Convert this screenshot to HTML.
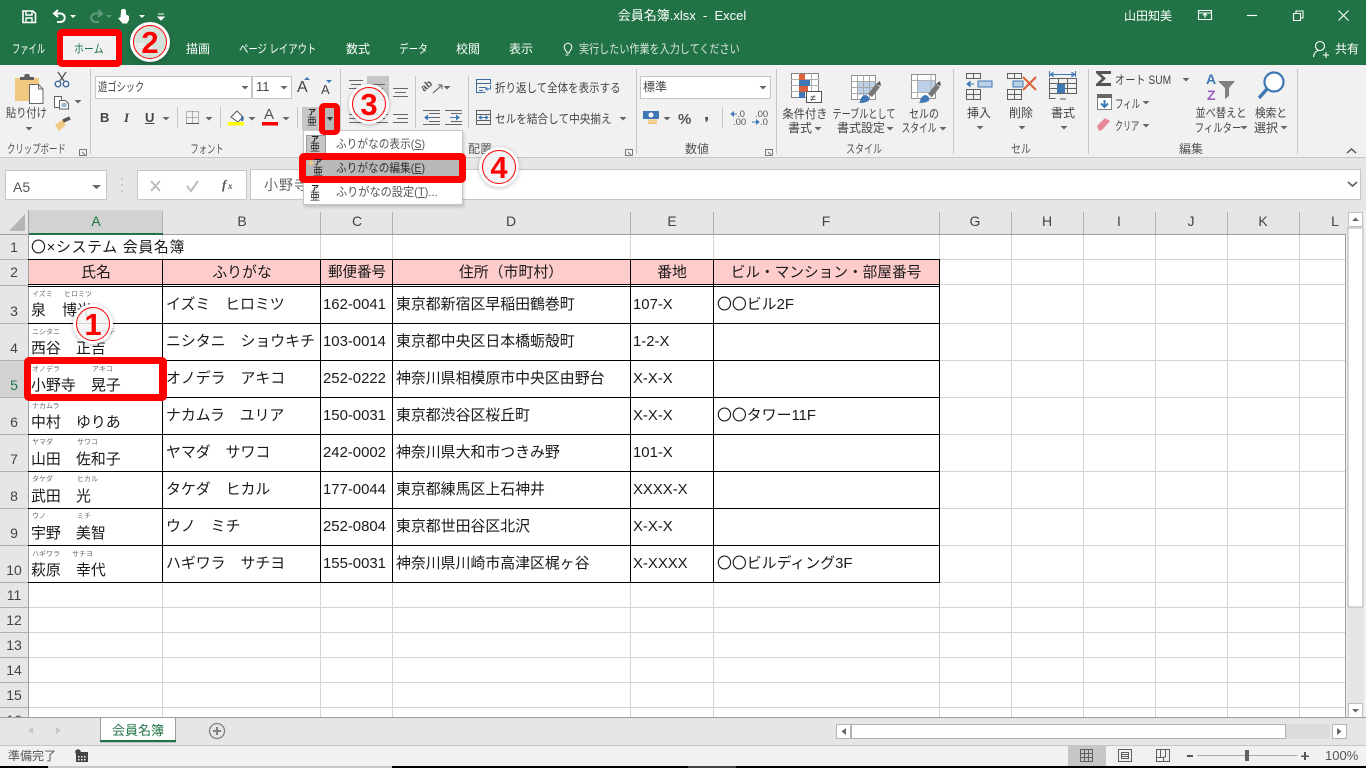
<!DOCTYPE html>
<html lang="ja"><head><meta charset="utf-8"><title>会員名簿.xlsx - Excel</title>
<style>
html,body{margin:0;padding:0;width:1366px;height:768px;overflow:hidden;background:#f1f1f1}
body{position:relative;font-family:"Liberation Sans","Noto Sans CJK JP",sans-serif;color:#444}
.b{position:absolute;box-sizing:border-box}
.t{position:absolute;white-space:nowrap;font-size:12px;line-height:16px;height:16px;color:#444}
.s{transform:scaleX(var(--k,1));transform-origin:0 50%}
.m{transform:translateX(-50%) scaleX(var(--k,1))}
.w{color:#fff}
.g{color:#555}
.c{position:absolute;white-space:nowrap;font-size:14.9px;line-height:20px;height:20px;color:#1a1a1a}
.f{position:absolute;white-space:nowrap;font-size:7px;line-height:10px;height:10px;color:#666}
.h{position:absolute;white-space:nowrap;font-size:14px;line-height:18px;height:18px;color:#444}
.r{position:absolute;box-sizing:border-box;border-style:solid;border-color:#f00;border-radius:5px;z-index:6}
.ka{font-size:8px!important;line-height:10px!important;font-weight:bold;color:#222}
.ab{font-size:10px!important;line-height:14px!important;color:#222}
svg{position:absolute;left:0;top:0}
</style></head><body>

<div class="b" style="left:0;top:0;width:1366px;height:65px;background:#217346"></div>
<div class="b" style="left:0;top:65px;width:1366px;height:93px;background:#f1f1f1;border-bottom:1px solid #c6c6c6"></div>
<div class="b" style="left:0;top:158px;width:1366px;height:52px;background:#e6e6e6"></div>
<div class="b" style="left:5px;top:170px;width:102px;height:30px;background:#fff;border:1px solid #c6c6c6"></div>
<div class="b" style="left:137px;top:170px;width:110px;height:30px;background:#fff;border:1px solid #c6c6c6"></div>
<div class="b" style="left:250px;top:169px;width:1111px;height:31px;background:#fff;border:1px solid #c6c6c6"></div>
<div class="b" style="left:95px;top:76px;width:157px;height:23px;background:#fff;border:1px solid #c6c6c6"></div>
<div class="b" style="left:252px;top:76px;width:40px;height:23px;background:#fff;border:1px solid #c6c6c6"></div>
<div class="b" style="left:640px;top:76px;width:131px;height:23px;background:#fff;border:1px solid #c6c6c6"></div>
<div class="b" style="left:367px;top:76px;width:22px;height:25px;background:#c6c6c6"></div>
<div class="b" style="left:302px;top:107px;width:17px;height:23px;background:#c6c6c6"></div>

<!-- sheet -->
<div class="b" style="left:0;top:210px;width:1347px;height:25px;background:#e6e6e6"></div>
<div class="b" style="left:0;top:235px;width:28px;height:482px;background:#e6e6e6"></div>
<div class="b" style="left:28px;top:235px;width:1317px;height:482px;background:#fff"></div>
<div class="b" style="left:29px;top:210px;width:134px;height:25px;background:#d2d2d2"></div>
<div class="b" style="left:0;top:361px;width:28px;height:37px;background:#d2d2d2"></div>
<div class="b" style="left:28px;top:260px;width:911px;height:25px;background:#ffcccc"></div>

<svg width="1366" height="768" viewBox="0 0 1366 768" fill="none">
<defs>
<path id="a" d="M-3.5 0h7l-3.5 3.5z" fill="#666"/>
</defs>
<g shape-rendering="crispEdges">
<!-- light grid -->
<path stroke="#d4d4d4" d="M162.5 235V717M320.5 235V717M392.5 235V717M630.5 235V717M713.5 235V717M939.5 235V717M1011.5 235V717M1083.5 235V717M1155.5 235V717M1227.5 235V717M1299.5 235V717M28 259.5H1345M28 284.5H1345M28 323.5H1345M28 360.5H1345M28 397.5H1345M28 434.5H1345M28 471.5H1345M28 508.5H1345M28 545.5H1345M28 582.5H1345M28 607.5H1345M28 632.5H1345M28 657.5H1345M28 682.5H1345M28 707.5H1345"/>
<!-- header lines -->
<path stroke="#b0b0b0" d="M162.5 212V234M320.5 212V234M392.5 212V234M630.5 212V234M713.5 212V234M939.5 212V234M1011.5 212V234M1083.5 212V234M1155.5 212V234M1227.5 212V234M1299.5 212V234M0 259.5H28M0 285.5H28M0 323.5H28M0 360.5H28M0 397.5H28M0 434.5H28M0 471.5H28M0 508.5H28M0 545.5H28M0 582.5H28M0 607.5H28M0 632.5H28M0 657.5H28M0 682.5H28M0 707.5H28"/>
<path stroke="#9f9f9f" d="M28.5 210V717M0 234.5H1345M1345.5 234V717"/>
<path d="M29 233h134v2H29z" fill="#217346"/>
<!-- black borders -->
<path stroke="#000" d="M28 259.5H940M28 284.5H940M28 286.5H940M28 323.5H940M28 360.5H940M28 397.5H940M28 434.5H940M28 471.5H940M28 508.5H940M28 545.5H940M28 582.5H940M162.5 259V583M320.5 259V583M392.5 259V583M630.5 259V583M713.5 259V583M939.5 259V583"/>
<!-- ribbon separators -->
<path stroke="#c6c6c6" d="M90.5 69V154M340.5 69V154M636.5 69V154M776.5 69V154M953.5 69V154M1088.5 69V154M1297.5 69V154M177.5 107V128M220.5 107V128M297.5 107V128M415.5 76V128M468.5 76V128M722.5 107V128"/>
</g>
<path d="M9 231L25 214V231z" fill="#b5b5b5"/>

<!-- QAT -->
<g stroke="#fff" stroke-width="1.6">
<path d="M23 11h10l2.500 2.500V22.500H23z"/><path d="M26 11v4h6v-4M26 22.500v-4.500h6v4.500" stroke-width="1.400"/>
<path d="M55 13.500h5.500a4.200 4.200 0 0 1 0 8.500H57M58 10l-4 3.500l4 3.500" stroke-width="2"/>
</g>
<path d="M70 15h6l-3 3z" fill="#fff"/>
<g stroke="#5f9a7c" stroke-width="2"><path d="M101 13.500h-5.500a4.200 4.200 0 0 0 0 8.500H99M98 10l4 3.500l-4 3.500"/></g>
<path d="M106 15h6l-3 3z" fill="#5f9a7c"/>
<path d="M121 10.500a2.700 2.700 0 0 1 5 0v4l3 1.500v4l-2 3.500h-4.500l-4.500-5.500l2.500-.5z" fill="#fff"/>
<path d="M139 15h6l-3 3z" fill="#fff"/><path d="M158 14h6M158 17h6l-3 3z" stroke="#fff" fill="#fff"/>
<!-- window -->
<g stroke="#fff" stroke-width="1.100">
<path d="M1198.500 10.500h13v9h-13zM1198.500 13h13M1205 18v-4M1203 15.500l2-2l2 2"/>
<path d="M1247 15.500h10"/>
<path d="M1293.500 13.500h7v7h-7zM1296 13.500v-2.500h7v7h-2.500"/>
<path d="M1338.500 10.500l10 10M1348.500 10.500l-10 10"/>
<circle cx="1320" cy="46" r="4.500"/><path d="M1313.500 57c.5-4 2.500-6 5-6.500M1323 55h6M1326 52v6"/>
<path d="M567 53c0-2-2.800-3-2.800-6a3.800 3.800 0 0 1 7.600 0c0 3-2.800 4-2.800 6zM565.500 55h3" stroke-width="1"/>
</g>

<!-- clipboard -->
<path d="M15 78h24v23H15z" fill="#f0c980"/>
<path d="M20 77h4l1-3h4l1 3h4v3H20z" fill="#606060"/>
<path d="M29.500 84.500h9l4.500 4.500v14.500H29.500z" fill="#fff" stroke="#666"/>
<path d="M38.500 84.500v4.500h4.500" stroke="#666"/>
<g stroke="#555" stroke-width="1.300"><path d="M58 72l6 9M66 72l-6 9"/></g>
<circle cx="58" cy="84" r="2.800" stroke="#3f6b9a" stroke-width="1.400"/><circle cx="66" cy="84" r="2.800" stroke="#3f6b9a" stroke-width="1.400"/>
<g stroke="#606060"><path d="M54.500 96.500h7v11h-7z" fill="#fff"/><path d="M59.500 100.500h6l3 3v5.500h-9z" fill="#fff"/><path d="M61.500 104h5M61.500 106h5" stroke="#3f6b9a"/></g>
<path d="M55 125l7-5l4 5l-7 6z" fill="#f0c980"/><path d="M63 121l7-3" stroke="#555" stroke-width="3.500"/>
<use href="#a" x="29" y="127"/><use href="#a" x="78" y="100"/>
<use href="#a" x="245" y="86"/><use href="#a" x="284" y="86"/>
<!-- launchers -->
<g stroke="#777"><path d="M79.500 149.500h7v6M79.500 149.500v6h7M82 152l3 3M625.500 149.500h7v6M625.500 149.500v6h7M628 152l3 3M765.500 149.500h7v6M765.500 149.500v6h7M768 152l3 3"/></g>
<!-- A up/down -->
<path d="M306 80l3 3h-6z" fill="#3f77b5" transform="translate(1 -3)"/>
<path d="M326 80h6l-3 3z" fill="#3f77b5"/>
<use href="#a" x="166" y="117"/><use href="#a" x="209" y="117"/><use href="#a" x="252" y="117"/><use href="#a" x="286" y="117"/>
<!-- borders icon -->
<path d="M186.500 111.500h12v12h-12zM192.500 111.500v12M186.500 117.500h12" stroke="#777" stroke-dasharray="1 1"/>
<path d="M186 123h13v1h-13z" fill="#555"/>
<!-- fill -->
<path d="M231 117l6-6l6 6l-5 5z" stroke="#606060" fill="#fff"/><path d="M241 116l3 2l-1 3h-2z" fill="#3f77b5"/>
<path d="M228 122h16v3.500h-16z" fill="#ffff00"/>
<path d="M262 122h16v3.500h-16z" fill="#f00"/>
<!-- align -->
<g stroke="#666" shape-rendering="crispEdges">
<path d="M349 80.500h14M351 84.500h10M349 88.500h14M371 84.500h14M373 88.500h10M393 88.500h15M395 92.500h11M393 96.500h15"/>
<path d="M349 114.500h15M349 118.500h11M349 122.500h15M373 114.500h15M376 118.500h9M373 122.500h15M393 114.500h15M397 118.500h11M393 122.500h15"/>
<path d="M429 113.500h11M429 117.500h11M429 121.500h11M423 124.500h17M423 110.500h17M451 113.500h11M445 110.500h17M445 124.500h17M451 121.500h11"/>
</g>
<path d="M424 117.500l4-3v6zM460 117.500l-4-3v6z" fill="#3f77b5"/><path d="M428 117h6v1h-6zM450 117h6v1h-6z" fill="#3f77b5"/>
<!-- orientation -->
<text x="424" y="92" font-size="10" fill="#555" font-weight="bold" transform="rotate(-40 424 92)">ab</text><path d="M433 93l8-7M438 85h4v4" stroke="#555"/>
<use href="#a" x="447" y="86"/>
<!-- wrap -->
<g stroke="#3f6b9a"><path d="M476.500 79.500h14v4h-14zM476.500 83.500v9h9M479 87.500h7M479 90.500h4"/></g>
<path d="M485 89h5.500v-4" stroke="#3f77b5"/><path d="M485 89l2.500-2v4z" fill="#3f77b5"/>
<!-- merge -->
<g stroke="#606060"><path d="M476.500 110.500h14v14h-14zM476.500 114.500h14M476.500 120.500h14"/></g>
<path d="M479 117.500h9M479 117.500l2-1.500v3zM488 117.500l-2-1.500v3z" stroke="#3f77b5" fill="#3f77b5"/>
<use href="#a" x="623" y="117"/><use href="#a" x="763" y="86"/>
<!-- number -->
<path d="M643 111h16v8h-16z" fill="#3f77b5"/><circle cx="651" cy="115" r="2.500" fill="#fff"/>
<path d="M648 119.500h9v2h-9zM648 122h9v2h-9z" fill="#f0c980"/>
<use href="#a" x="667" y="117"/>
<text x="678" y="124" font-size="15" font-weight="bold" fill="#555" stroke="none">%</text>
<path d="M705 117h3v3l-2 2.500" fill="#555"/>
<text x="737" y="117" font-size="9.500" fill="#555">.0</text><text x="733" y="125" font-size="9.500" fill="#555">.00</text>
<text x="755" y="117" font-size="9.500" fill="#555">.00</text><text x="760" y="125" font-size="9.500" fill="#555">.0</text>
<path d="M731 114h6M731 114l2.500-2v4zM752 122h7M759 122l-2.500-2v4z" stroke="#3f77b5" fill="#3f77b5"/>
<!-- style -->
<path d="M791.500 73.500h27v24h-27z" stroke="#808080" fill="#fff"/>
<path d="M791 79.500h28M791 85.500h28M791 91.500h28M799.500 73v25M811.500 73v25" stroke="#b0b0b0"/>
<path d="M799 74h6v6h-6zM799 86h9v6h-9z" fill="#d9603b"/><path d="M799 80h11v6h-11zM799 92h6v6h-6z" fill="#3f77b5"/>
<path d="M806.500 91.500h15v11h-15z" fill="#fff" stroke="#555"/>
<text x="810" y="101.500" font-size="10" fill="#333">≠</text>
<g id="tb"><path d="M851.500 75.500h24v24h-24z" fill="#fff" stroke="#909090"/><path d="M857 81h18v14h-18z" fill="#bcd0e8"/><path d="M851 81.500h25M851 87.500h25M851 93.500h25M857.500 75v25M863.500 75v25M869.500 75v25" stroke="#a9a9a9"/></g>
<path d="M866 95c-3 0-6 3-6 7l-2 .5c4 1 9 0 11-2c1-2 0-4-3-5.500z" fill="#3f77b5"/><path d="M868 94l8-10l4 3l-8 10z" fill="#777"/><path d="M876 84l4-3l1 5z" fill="#555"/>
<path d="M911.500 74.500h24v24h-24z" fill="#fff" stroke="#909090"/><path d="M911 80.500h25M911 92.500h25" stroke="#b0b0b0"/><path d="M917 81h18v11h-18z" fill="#bcd0e8"/><path d="M917.500 75v24M931 75v24" stroke="#b0b0b0"/>
<path d="M926 95c-3 0-6 3-6 7l-2 .5c4 1 9 0 11-2c1-2 0-4-3-5.500z" fill="#3f77b5"/><path d="M928 94l8-10l4 3l-8 10z" fill="#777"/><path d="M936 84l4-3l1 5z" fill="#555"/>
<use href="#a" x="818" y="127"/><use href="#a" x="890" y="127"/><use href="#a" x="943" y="127"/>
<!-- cells -->
<g stroke="#606060" shape-rendering="crispEdges">
<path d="M966.500 73.500h14v5h-14zM973.500 73v5M966.500 89.500h14v10h-14zM966.500 94.500h14M973.500 89v10"/>
<path d="M1007.500 73.500h14v5h-14zM1014.500 73v5M1007.500 89.500h14v10h-14zM1007.500 94.500h14M1014.500 89v10"/>
<path d="M1049.500 78.500h27v15h-27zM1049.500 83.500h27M1049.500 88.500h27M1058.500 78v15M1067.500 78v15M1049.500 93.500v5h6M1060 99h6"/>
</g>
<path d="M978 81h14v6h-14zM1013 81h10v6h-10z" fill="#bcd0e8" stroke="#3f77b5"/>
<path d="M967 84h7M967 84l3-2.500v5z" stroke="#3f77b5" fill="#3f77b5"/>
<path d="M1023 77l13 13M1036 77l-13 13" stroke="#d9603b" stroke-width="2"/>
<path d="M1057 84h8v9h-8z" fill="#3f77b5"/>
<path d="M1050 74.500h25M1050 74.500l3-2v4zM1075 74.500l-3-2v4zM1049.500 71v6M1075.500 71v6" stroke="#3f77b5"/>
<use href="#a" x="980" y="126"/><use href="#a" x="1022" y="126"/><use href="#a" x="1064" y="126"/>
<!-- edit -->
<path d="M1096 71h15v3h-10l5 4.500l-5 4.500h10v3h-15v-2l6-5.500l-6-5.500z" fill="#555"/>
<use href="#a" x="1186" y="78"/>
<path d="M1097.500 94.500h14v15h-14z" fill="#fff" stroke="#808080"/><path d="M1097 94h15v4h-15z" fill="#666"/>
<path d="M1104.500 100v7M1101 103.500l3.500 3.500l3.500-3.500" stroke="#3f77b5" stroke-width="2"/>
<use href="#a" x="1146" y="101"/>
<path d="M1097 126l8-8l5 3l-8 9l-3 1z" fill="#e8899b"/>
<use href="#a" x="1146" y="124"/>
<text x="1206" y="84" font-size="14" font-weight="bold" fill="#3f77b5">A</text>
<text x="1207" y="100" font-size="14" font-weight="bold" fill="#9b5fc0">Z</text>
<path d="M1218 81h17l-6 7v8l-4 3v-11z" fill="#808080"/>
<circle cx="1274" cy="82" r="9.500" stroke="#3f77b5" stroke-width="2.200" fill="#fff"/>
<path d="M1267 89l-8 9" stroke="#3f77b5" stroke-width="3.500"/>
<use href="#a" x="1244" y="126"/><use href="#a" x="1284" y="126"/>
<path d="M1347 153l4.500-4l4.500 4" stroke="#555" stroke-width="1.500"/>
<!-- formula -->
<path d="M92 185h9l-4.500 4z" fill="#666"/>
<path d="M122 178v2M122 184v2M122 190v2" stroke="#aaa"/>
<path d="M151 181l9 10M160 181l-9 10" stroke="#bbb" stroke-width="1.800"/>
<path d="M187 186l4 5l7-10" stroke="#bbb" stroke-width="2"/>
<text x="222" y="189" font-size="13" font-style="italic" font-weight="bold" font-family="Liberation Serif,serif" fill="#555">f</text><text x="228" y="189" font-size="9" font-style="italic" font-weight="bold" font-family="Liberation Serif,serif" fill="#555">x</text>
<path d="M1348 182l4.500 4l4.500-4" stroke="#666" stroke-width="1.800"/>

<!-- vertical scroll -->
<path d="M1347 210h17v507h-17z" fill="#e6e6e6"/>
<path d="M1348 228h15v379h-15z" fill="#fff" stroke="#b5b5b5"/>
<path d="M1348.500 212.500h14v14h-14zM1348.500 703.500h14v14h-14z" fill="#fff" stroke="#c0c0c0"/>
<path d="M1352 221h7l-3.500-3.500zM1352 709h7l-3.500 3.500z" fill="#666"/>
<!-- tabs -->
<path d="M0 717h1366v28H0z" fill="#e6e6e6"/>
<path d="M0 717.500H1366" stroke="#9f9f9f"/>
<path d="M100.500 742V717.500H175.500V742z" fill="#fff" stroke="#9f9f9f"/>
<path d="M100 740h76v2h-76z" fill="#217346"/>
<path d="M33 727l-5 3.500l5 3.500zM56 727l5 3.500l-5 3.500z" fill="#c6c6c6"/>
<circle cx="217" cy="731" r="7.500" stroke="#808080" stroke-width="1.300"/>
<path d="M213 731h8M217 727v8" stroke="#808080" stroke-width="2"/>
<path d="M836.500 724.500h14v14h-14zM1332.500 724.500h14v14h-14z" fill="#fff" stroke="#b5b5b5"/>
<path d="M846 728l-4.500 3.500l4.500 3.500zM1337 728l4.500 3.500l-4.500 3.500z" fill="#666"/>
<path d="M851 724h479v15H851z" fill="#dcdcdc"/>
<path d="M851.500 724.500h434v14h-434z" fill="#fff" stroke="#b0b0b0"/>
<!-- status -->
<path d="M0 745h1366v21H0z" fill="#f1f1f1"/>
<path d="M0 745.500H1366" stroke="#c6c6c6"/>
<path d="M0 766h1366v2H0z" fill="#000"/><path d="M48 766h344v2H48z" fill="#c8c8c8"/><path d="M688 766h48v2h-48z" fill="#444"/>
<circle cx="78" cy="752" r="2.800" fill="#444"/>
<path d="M76 752h12v10H76z" fill="#444"/><path d="M78 756h1.500v1.500H78zM81 756h1.500v1.500H81zM84 756h1.500v1.500H84zM78 759h1.500v1.500H78zM81 759h1.500v1.500H81zM84 759h1.500v1.500H84z" fill="#fff"/>
<path d="M1068 746h38v20h-38z" fill="#c6c6c6"/>
<g stroke="#606060" shape-rendering="crispEdges">
<path d="M1080.500 749.500h12v12h-12zM1080.500 753.500h12M1080.500 757.500h12M1084.500 749v12M1088.500 749v12"/>
<path d="M1118.500 749.500h13v12h-13zM1121.500 752.500h7v6h-7zM1122 754.500h6M1122 756.500h6"/>
<path d="M1156.500 749.500h13v12h-13zM1156.500 757.500h7v4M1160.500 749v8M1165.500 749v8h-2"/>
</g>
<path d="M1187 755h6v2h-6z" fill="#555"/><path d="M1197 755h100v1h-100z" fill="#aaa"/><path d="M1245 750h4v11h-4z" fill="#606060"/>
<path d="M1301 755.500h8v1.500h-8zM1304 752h2v8h-2z" fill="#555"/>
</svg>

<!-- title bar text -->
<div class="t w" style="left:682px;top:8px;font-size:13px;transform:translateX(-50%)">会員名簿.xlsx&nbsp; -&nbsp; Excel</div>
<div class="t w" style="left:1124px;top:8px">山田知美</div>
<div class="t w" style="left:1335px;top:41px">共有</div>
<div class="t w s" style="left:12px;top:41px;--k:.69">ファイル</div>
<div class="t w" style="left:133px;top:41px">挿入</div>
<div class="t w" style="left:186px;top:41px">描画</div>
<div class="t w s" style="left:239px;top:41px;--k:.78">ページ レイアウト</div>
<div class="t w" style="left:346px;top:41px">数式</div>
<div class="t w s" style="left:399px;top:41px;--k:.8">データ</div>
<div class="t w" style="left:456px;top:41px">校閲</div>
<div class="t w" style="left:509px;top:41px">表示</div>
<div class="t s" style="left:579px;top:41px;color:#d6e4dc;--k:.84">実行したい作業を入力してください</div>

<!-- ribbon text -->
<div class="t s" style="left:6px;top:105px;--k:.85">貼り付け</div>
<div class="t g s" style="left:7px;top:141px;--k:.7">クリップボード</div>
<div class="t s" style="left:98px;top:79px;--k:.77">遊ゴシック</div>
<div class="t" style="left:256px;top:79px;font-size:13px">11</div>
<div class="t" style="left:297px;top:80px;font-size:16px;font-weight:normal">A</div>
<div class="t" style="left:321px;top:82px;font-size:13px">A</div>
<div class="t" style="left:100px;top:110px;font-weight:bold;font-size:13px">B</div>
<div class="t" style="left:124px;top:110px;font-style:italic;font-weight:bold;font-size:13px;font-family:'Liberation Serif',serif">I</div>
<div class="t" style="left:145px;top:110px;font-weight:bold;font-size:13px;text-decoration:underline">U</div>
<div class="t" style="left:264px;top:107px;font-size:15px;color:#555">A</div>
<div class="t ka" style="left:308px;top:108px">ア</div>
<div class="t ab" style="left:307px;top:116px">亜</div>
<div class="t g m" style="left:207px;top:141px;--k:.69">フォント</div>
<div class="t g" style="left:468px;top:141px">配置</div>
<div class="t s" style="left:495px;top:80px;--k:.875">折り返して全体を表示する</div>
<div class="t s" style="left:495px;top:111px;--k:.886">セルを結合して中央揃え</div>
<div class="t" style="left:643px;top:79px">標準</div>
<div class="t g m" style="left:697px;top:141px">数値</div>
<div class="t m" style="left:805px;top:106px;--k:.94">条件付き</div>
<div class="t m" style="left:800px;top:120px">書式</div>
<div class="t m" style="left:864px;top:106px;--k:.76">テーブルとして</div>
<div class="t m" style="left:861px;top:120px">書式設定</div>
<div class="t m" style="left:924px;top:106px;--k:.83">セルの</div>
<div class="t m" style="left:919px;top:120px;--k:.73">スタイル</div>
<div class="t g m" style="left:864px;top:141px;--k:.75">スタイル</div>
<div class="t m" style="left:979px;top:105px">挿入</div>
<div class="t m" style="left:1021px;top:105px">削除</div>
<div class="t m" style="left:1063px;top:105px">書式</div>
<div class="t g m" style="left:1021px;top:141px;--k:.83">セル</div>
<div class="t s" style="left:1115px;top:72px;--k:.85">オート SUM</div>
<div class="t s" style="left:1115px;top:96px;--k:.7">フィル</div>
<div class="t s" style="left:1115px;top:118px;--k:.67">クリア</div>
<div class="t m" style="left:1221px;top:105px;--k:.85">並べ替えと</div>
<div class="t m" style="left:1218px;top:120px;--k:.78">フィルター</div>
<div class="t m" style="left:1271px;top:105px;--k:.89">検索と</div>
<div class="t m" style="left:1266px;top:120px">選択</div>
<div class="t g m" style="left:1191px;top:141px">編集</div>

<!-- formula text -->
<div class="h" style="left:13px;top:178px;color:#555">A5</div>
<div class="h" style="left:264px;top:176px;color:#666;letter-spacing:1px">小野寺　晃子</div>

<!-- column headers -->
<div class="h m" style="left:96px;top:212px;color:#217346">A</div>
<div class="h m" style="left:242px;top:212px">B</div>
<div class="h m" style="left:357px;top:212px">C</div>
<div class="h m" style="left:511px;top:212px">D</div>
<div class="h m" style="left:672px;top:212px">E</div>
<div class="h m" style="left:826px;top:212px">F</div>
<div class="h m" style="left:975px;top:212px">G</div>
<div class="h m" style="left:1047px;top:212px">H</div>
<div class="h m" style="left:1119px;top:212px">I</div>
<div class="h m" style="left:1191px;top:212px">J</div>
<div class="h m" style="left:1263px;top:212px">K</div>
<div class="h m" style="left:1335px;top:212px">L</div>
<!-- row headers -->
<div class="h m" style="left:14px;top:238px">1</div>
<div class="h m" style="left:14px;top:263px">2</div>
<div class="h m" style="left:14px;top:302px">3</div>
<div class="h m" style="left:14px;top:339px">4</div>
<div class="h m" style="left:14px;top:376px;color:#217346">5</div>
<div class="h m" style="left:14px;top:413px">6</div>
<div class="h m" style="left:14px;top:450px">7</div>
<div class="h m" style="left:14px;top:487px">8</div>
<div class="h m" style="left:14px;top:524px">9</div>
<div class="h m" style="left:14px;top:561px">10</div>
<div class="h m" style="left:14px;top:586px">11</div>
<div class="h m" style="left:14px;top:611px">12</div>
<div class="h m" style="left:14px;top:636px">13</div>
<div class="h m" style="left:14px;top:661px">14</div>
<div class="h m" style="left:14px;top:686px">15</div>
<div class="h m" style="left:14px;top:711px;height:6px;overflow:hidden">16</div>

<!-- cells -->
<div class="c" style="left:31px;top:238px;letter-spacing:.7px">〇×システム 会員名簿</div>
<div class="c m" style="left:96px;top:263px">氏名</div>
<div class="c m" style="left:242px;top:263px">ふりがな</div>
<div class="c m" style="left:357px;top:263px;font-size:14.5px">郵便番号</div>
<div class="c m" style="left:511px;top:263px">住所（市町村）</div>
<div class="c m" style="left:672px;top:263px">番地</div>
<div class="c m" style="left:826px;top:263px;font-size:14.67px">ビル・マンション・部屋番号</div>

<div class="f" style="left:32px;top:290px">イズミ</div><div class="f" style="left:64px;top:290px">ヒロミツ</div>
<div class="c" style="left:31px;top:301px">泉</div><div class="c" style="left:62px;top:301px">博光</div>
<div class="f" style="left:32px;top:328px">ニシタニ</div><div class="f" style="left:80px;top:328px">ショウキチ</div>
<div class="c" style="left:31px;top:339px">西谷</div><div class="c" style="left:76px;top:339px">正吉</div>
<div class="f" style="left:32px;top:365px">オノデラ</div><div class="f" style="left:92px;top:365px">アキコ</div>
<div class="c" style="left:31px;top:376px">小野寺</div><div class="c" style="left:91px;top:376px">晃子</div>
<div class="f" style="left:32px;top:402px">ナカムラ</div>
<div class="c" style="left:31px;top:413px">中村</div><div class="c" style="left:76px;top:413px">ゆりあ</div>
<div class="f" style="left:32px;top:438px">ヤマダ</div><div class="f" style="left:77px;top:438px">サワコ</div>
<div class="c" style="left:31px;top:450px">山田</div><div class="c" style="left:76px;top:450px">佐和子</div>
<div class="f" style="left:32px;top:475px">タケダ</div><div class="f" style="left:77px;top:475px">ヒカル</div>
<div class="c" style="left:31px;top:487px">武田</div><div class="c" style="left:76px;top:487px">光</div>
<div class="f" style="left:32px;top:512px">ウノ</div><div class="f" style="left:77px;top:512px">ミチ</div>
<div class="c" style="left:31px;top:524px">宇野</div><div class="c" style="left:76px;top:524px">美智</div>
<div class="f" style="left:32px;top:550px">ハギワラ</div><div class="f" style="left:72px;top:550px">サチヨ</div>
<div class="c" style="left:31px;top:561px">萩原</div><div class="c" style="left:76px;top:561px">幸代</div>

<div class="c" style="left:166px;top:295px">イズミ　ヒロミツ</div>
<div class="c" style="left:166px;top:332px">ニシタニ　ショウキチ</div>
<div class="c" style="left:166px;top:369px">オノデラ　アキコ</div>
<div class="c" style="left:166px;top:406px">ナカムラ　ユリア</div>
<div class="c" style="left:166px;top:443px">ヤマダ　サワコ</div>
<div class="c" style="left:166px;top:480px">タケダ　ヒカル</div>
<div class="c" style="left:166px;top:517px">ウノ　ミチ</div>
<div class="c" style="left:166px;top:554px">ハギワラ　サチヨ</div>

<div class="c" style="left:323px;top:295px">162-0041</div>
<div class="c" style="left:323px;top:332px">103-0014</div>
<div class="c" style="left:323px;top:369px">252-0222</div>
<div class="c" style="left:323px;top:406px">150-0031</div>
<div class="c" style="left:323px;top:443px">242-0002</div>
<div class="c" style="left:323px;top:480px">177-0044</div>
<div class="c" style="left:323px;top:517px">252-0804</div>
<div class="c" style="left:323px;top:554px">155-0031</div>

<div class="c" style="left:396px;top:295px">東京都新宿区早稲田鶴巻町</div>
<div class="c" style="left:396px;top:332px">東京都中央区日本橋蛎殻町</div>
<div class="c" style="left:396px;top:369px">神奈川県相模原市中央区由野台</div>
<div class="c" style="left:396px;top:406px">東京都渋谷区桜丘町</div>
<div class="c" style="left:396px;top:443px">神奈川県大和市つきみ野</div>
<div class="c" style="left:396px;top:480px">東京都練馬区上石神井</div>
<div class="c" style="left:396px;top:517px">東京都世田谷区北沢</div>
<div class="c" style="left:396px;top:554px">神奈川県川崎市高津区梶ヶ谷</div>

<div class="c" style="left:633px;top:295px">107-X</div>
<div class="c" style="left:633px;top:332px">1-2-X</div>
<div class="c" style="left:633px;top:369px">X-X-X</div>
<div class="c" style="left:633px;top:406px">X-X-X</div>
<div class="c" style="left:633px;top:443px">101-X</div>
<div class="c" style="left:633px;top:480px">XXXX-X</div>
<div class="c" style="left:633px;top:517px">X-X-X</div>
<div class="c" style="left:633px;top:554px">X-XXXX</div>

<div class="c" style="left:717px;top:295px">〇〇ビル2F</div>
<div class="c" style="left:717px;top:406px">〇〇タワー11F</div>
<div class="c" style="left:717px;top:554px">〇〇ビルディング3F</div>

<!-- bottom text -->
<div class="t" style="left:112px;top:723px;font-size:13px;color:#217346">会員名簿</div>
<div class="t g" style="left:8px;top:748px">準備完了</div>
<div class="t g" style="left:1325px;top:748px;font-size:13px">100%</div>

<!-- dropdown menu -->
<div class="b" style="left:303px;top:130px;width:160px;height:75px;background:#fff;border:1px solid #c6c6c6;box-shadow:1px 2px 3px rgba(0,0,0,.18);z-index:3"></div>
<div class="b" style="left:306px;top:135px;width:20px;height:20px;background:#c6c6c6;border:1px solid #999;z-index:3"></div>
<div class="t ka" style="left:311px;top:135px;z-index:4">ア</div>
<div class="t ab" style="left:310px;top:142px;z-index:4">亜</div>
<div class="t s" style="left:336px;top:136px;color:#555;z-index:4;--k:.89">ふりがなの表示(<u>S</u>)</div>
<div class="b" style="left:306px;top:159px;width:153px;height:18px;background:#b9b9b9;z-index:4"></div>
<div class="b" style="left:309px;top:161px;width:4px;height:4px;background:#f0c980;transform:rotate(45deg);z-index:5"></div>
<div class="t ka" style="left:314px;top:158px;z-index:7">ア</div>
<div class="t ab" style="left:313px;top:166px;z-index:7">亜</div>
<div class="t s" style="left:336px;top:160px;color:#333;z-index:5;--k:.89">ふりがなの編集(<u>E</u>)</div>
<div class="t ka" style="left:311px;top:184px;z-index:4">ア</div>
<div class="t ab" style="left:310px;top:191px;z-index:4">亜</div>
<div class="t s" style="left:336px;top:184px;color:#555;z-index:4;--k:.93">ふりがなの設定(<u>T</u>)...</div>

<!-- home tab + red boxes -->
<div class="b" style="left:60px;top:32px;width:60px;height:33px;background:#f1f1f1"></div>
<div class="t s" style="left:74px;top:41px;color:#217346;z-index:5;--k:.83">ホーム</div>
<div class="r" style="left:57px;top:29px;width:65px;height:38px;border-width:7px 6px"></div>
<div class="r" style="left:319px;top:103px;width:21px;height:32px;border-width:5px 6px"></div>
<div class="b" style="left:325px;top:108px;width:9px;height:22px;background:#b8b8b8"></div>
<div class="b" style="left:327px;top:117px;width:0;height:0;border:3px solid transparent;border-top:4px solid #333;z-index:5"></div>
<div class="r" style="left:299px;top:153px;width:167px;height:30px;border-width:7px"></div>
<div class="r" style="left:24px;top:357px;width:143px;height:44px;border-width:7px 8px 7px 7px"></div>

<!-- circled numbers -->
<svg width="1366" height="768" viewBox="0 0 1366 768" style="z-index:8" fill="none">
<g font-family="Liberation Sans,sans-serif" font-weight="bold" font-size="31" text-anchor="middle" style="filter:drop-shadow(0 1px 2px rgba(0,0,0,.25))">
<g><circle cx="93" cy="324" r="18.500" fill="#fff" fill-opacity=".82" stroke="#fff" stroke-width="3"/><circle cx="93" cy="324" r="16.500" fill="none" stroke="#f00"/><text x="93" y="335" fill="#f00">1</text></g>
<g><circle cx="150" cy="42" r="18.500" fill="#fff" fill-opacity=".82" stroke="#fff" stroke-width="3"/><circle cx="150" cy="42" r="16.500" fill="none" stroke="#f00"/><text x="150" y="53" fill="#f00">2</text></g>
<g><circle cx="369" cy="104" r="18.500" fill="#fff" fill-opacity=".82" stroke="#fff" stroke-width="3"/><circle cx="369" cy="104" r="16.500" fill="none" stroke="#f00"/><text x="369" y="115" fill="#f00">3</text></g>
<g><circle cx="499" cy="167" r="18.500" fill="#fff" fill-opacity=".82" stroke="#fff" stroke-width="3"/><circle cx="499" cy="167" r="16.500" fill="none" stroke="#f00"/><text x="499" y="178" fill="#f00">4</text></g>
</g>
</svg>
</body></html>
